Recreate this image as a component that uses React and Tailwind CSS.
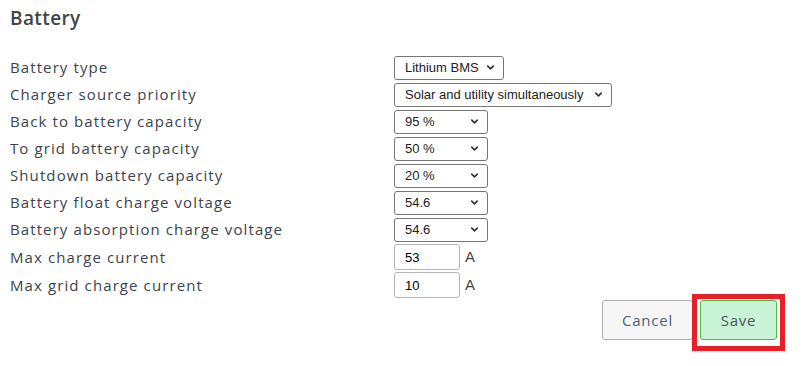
import { ChevronDown } from 'lucide-react';

const rows = [
  { label: 'Battery type', value: 'Lithium BMS', w: 'w-[110px]' },
  { label: 'Charger source priority', value: 'Solar and utility simultaneously', w: 'w-[218px]' },
  { label: 'Back to battery capacity', value: '95 %', w: 'w-[94px]' },
  { label: 'To grid battery capacity', value: '50 %', w: 'w-[94px]' },
  { label: 'Shutdown battery capacity', value: '20 %', w: 'w-[94px]' },
  { label: 'Battery float charge voltage', value: '54.6', w: 'w-[94px]' },
  { label: 'Battery absorption charge voltage', value: '54.6', w: 'w-[94px]' },
];

const inputs = [
  { label: 'Max charge current', value: '53' },
  { label: 'Max grid charge current', value: '10' },
];

function FakeSelect({ value, w }) {
  return (
    <div
      className={`${w} h-[24px] flex items-center justify-between pl-[10px] pr-[7px] border border-[#767676] rounded-[3px] bg-white text-[13px] text-[#222] tracking-normal font-['Liberation_Sans',Arial,sans-serif]`}
    >
      <span>{value}</span>
      <ChevronDown size={11} strokeWidth={3.5} className="text-[#333]" />
    </div>
  );
}

export default function App() {
  return (
    <div className="w-[806px] h-[366px] bg-white overflow-hidden px-[10px] font-['Open_Sans',sans-serif]">
      {/* Title */}
      <h2 className="pt-[5px] text-[19px] leading-[26px] font-semibold tracking-[0.4px] text-[#444]">Battery</h2>

      {/* Settings */}
      <div className="mt-[23px]">
        {rows.map((r) => (
          <div key={r.label} className="h-[27px] flex items-center">
            <label className="w-[384px] text-[15px] tracking-[1.1px] text-[#3c444d]">{r.label}</label>
            <FakeSelect value={r.value} w={r.w} />
          </div>
        ))}
        {inputs.map((r) => (
          <div key={r.label} className="h-[28px] flex items-center">
            <label className="w-[384px] text-[15px] tracking-[1.1px] text-[#3c444d]">{r.label}</label>
            <input
              readOnly
              value={r.value}
              className="w-[66px] h-[26px] px-[10px] border border-[#b5b5b5] rounded-[3px] text-[13px] text-black font-['Liberation_Sans',Arial,sans-serif]"
            />
            <span className="ml-[5px] text-[15px] text-[#444] font-['Liberation_Sans',Arial,sans-serif]">A</span>
          </div>
        ))}
      </div>

      {/* Actions */}
      <div className="flex justify-end gap-[7px] pr-[19px] mt-[1px]">
        <button className="w-[91px] h-[40px] border border-[#adadad] rounded-[3px] bg-[#f6f6f6] text-[15px] tracking-[0.8px] text-[#4d6077]">
          Cancel
        </button>
        <span className="relative">
          <button className="w-[77px] h-[40px] border border-[#4cbb4c] rounded-[3px] bg-[#c8f3d6] text-[15px] tracking-[0.8px] text-[#4b5666]">
            Save
          </button>
          <span className="absolute left-[-8px] right-[-8px] top-[-6px] bottom-[-11px] border-[5px] border-[#e81e28] pointer-events-none" />
        </span>
      </div>
    </div>
  );
}
